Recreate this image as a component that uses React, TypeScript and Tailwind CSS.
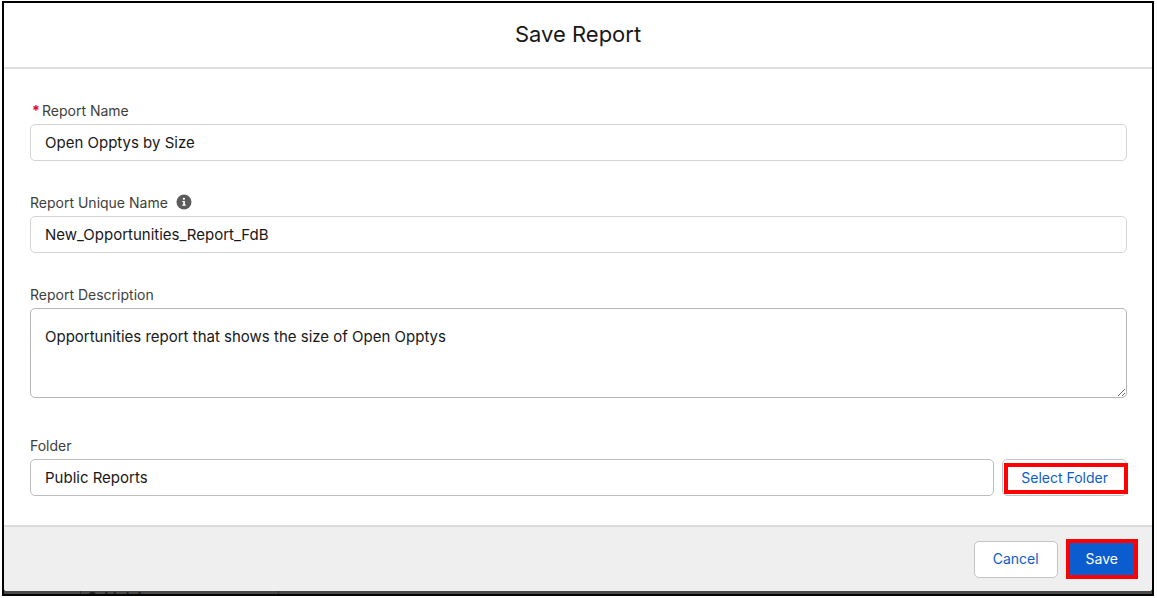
import React, { useState } from "react";

const inputClass =
  "block h-[37px] w-full min-w-0 rounded-[5px] border bg-white px-3.5 text-[15px] text-[#181818] outline-none";
const labelClass = "flex h-5 items-center text-sm text-[#3e3e3c]";

const InfoIcon = () => (
  <svg viewBox="0 0 16 16" className="h-4 w-4" aria-hidden="true">
    <circle cx="8" cy="8" r="7.5" fill="#5c5c5c" />
    <circle cx="7.9" cy="4.8" r="1.1" fill="#fff" />
    <path d="M6.3 6.9h2.6v3.7h.9v1.1H6.3v-1.1h.9V8h-.9z" fill="#fff" />
  </svg>
);

export default function App() {
  const [name, setName] = useState("Open Opptys by Size");
  const [uniqueName, setUniqueName] = useState("New_Opportunities_Report_FdB");
  const [description, setDescription] = useState("Opportunities report that shows the size of Open Opptys");
  const [folder, setFolder] = useState("Public Reports");

  return (
    <div className="flex min-h-screen bg-white pt-px pr-[3px] pb-0.5 pl-0.5 font-['Inter',sans-serif]">
      <div className="flex w-full flex-col border-2 border-black bg-[#4a4a4a]">
        <form
          className="flex flex-1 flex-col overflow-hidden rounded-b-[3px] bg-white"
          onSubmit={(e) => e.preventDefault()}
        >
          <header className="flex h-[66px] items-center justify-center border-b-2 border-[#dfdfdf] pb-0.5">
            <h1 className="text-[22px] leading-7 text-[#181818]">Save Report</h1>
          </header>

          <div className="flex flex-1 flex-col gap-8 pt-8 pr-[25px] pb-7 pl-[26px]">
            <div>
              <label htmlFor="report-name" className={labelClass}>
                <span className="w-3 pl-0.5 font-bold text-[#ea001e]">*</span>
                Report Name
              </label>
              <input
                id="report-name"
                className={`${inputClass} mt-[3px] border-[#d4d4d4]`}
                value={name}
                onChange={(e) => setName(e.target.value)}
              />
            </div>

            <div>
              <div className="flex items-start gap-2">
                <label htmlFor="unique-name" className={labelClass}>
                  Report Unique Name
                </label>
                <button type="button" aria-label="Help" className="pt-px">
                  <InfoIcon />
                </button>
              </div>
              <input
                id="unique-name"
                className={`${inputClass} mt-[3px] border-[#d4d4d4]`}
                value={uniqueName}
                onChange={(e) => setUniqueName(e.target.value)}
              />
            </div>

            <div>
              <label htmlFor="description" className={labelClass}>
                Report Description
              </label>
              <textarea
                id="description"
                className="mt-[3px] block h-[90px] w-full resize-y rounded-[5px] border border-[#b5b5b5] bg-white px-3.5 py-4 text-[15px] leading-6 text-[#181818] outline-none"
                value={description}
                onChange={(e) => setDescription(e.target.value)}
              />
            </div>

            <div className="pt-1.5">
              <label htmlFor="folder" className={labelClass}>
                Folder
              </label>
              <div className="mt-[3px] flex gap-2">
                <input
                  id="folder"
                  className={`${inputClass} flex-1 border-[#bdbdbd]`}
                  value={folder}
                  onChange={(e) => setFolder(e.target.value)}
                />
                <div className="relative shrink-0">
                  <button
                    type="button"
                    className="h-[37px] rounded-[5px] border border-[#c4c4c4] bg-white px-[18px] text-sm text-[#0b5cce]"
                  >
                    Select Folder
                  </button>
                  <span className="pointer-events-none absolute top-1 -right-px bottom-0.5 left-0.5 border-4 border-[#fe0000]" />
                </div>
              </div>
            </div>
          </div>

          <footer className="flex items-center justify-end gap-2 border-t-2 border-[#dadada] bg-[#efefef] py-3 pr-3.5">
            <button
              type="button"
              className="h-[37px] rounded-[5px] border border-[#c4c4c4] bg-white px-[18px] text-sm text-[#0b5cce]"
            >
              Cancel
            </button>
            <button type="submit" className="h-10 border-4 border-[#fe0000] bg-[#0b5cce] px-4 text-sm text-white">
              Save
            </button>
          </footer>
        </form>

        {/* page behind the dialog */}
        <div className="flex h-[3px] overflow-hidden text-[13px] leading-3 font-bold text-[#1c1c1c]" aria-hidden="true">
          <div className="w-[77px] border-r border-[#333]" />
          <div className="w-[198px] border-r border-[#333] pl-[7px]">Subtotal</div>
        </div>
      </div>
    </div>
  );
}
